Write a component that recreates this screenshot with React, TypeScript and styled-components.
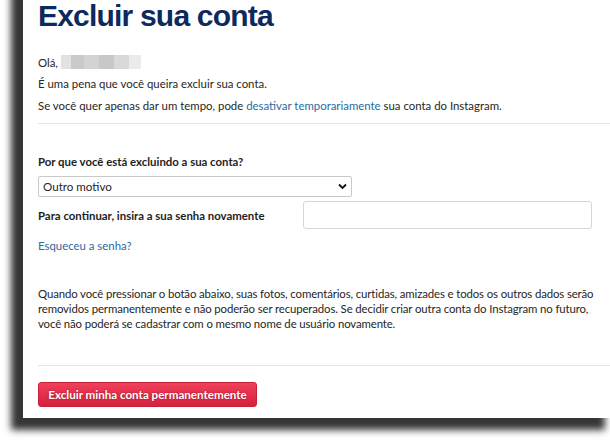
import React from "react";
import styled, { createGlobalStyle } from "styled-components";

const Global = createGlobalStyle`
  html, body { margin: 0; padding: 0; background: #ffffff; }
  body { overflow: hidden; }
  * { box-sizing: border-box; }
`;

const Viewport = styled.div`
  width: 610px;
  height: 440px;
  overflow: hidden;
  background: #ffffff;
`;

const Card = styled.div`
  margin: -24px 0 0 23px;
  width: 594px;
  padding: 25px 0 11px 15px;
  background: #ffffff;
  box-shadow: -12px 12px 7px #363636;
  font-family: Lato, "Open Sans", sans-serif;
  font-size: 11.4px;
  line-height: 15px;
  color: #262626;
`;

const Title = styled.h1`
  margin: 0;
  font-family: "Liberation Sans", Arial, sans-serif;
  font-weight: 700;
  font-size: 30px;
  line-height: 30px;
  letter-spacing: -0.8px;
  color: #0d2a5c;
`;

const Para = styled.p<{ $top: number; $tight?: boolean }>`
  margin: ${(p) => p.$top}px 0 0 0;
  max-width: ${(p) => (p.$tight ? "567px" : "none")};
  letter-spacing: ${(p) => (p.$tight ? "-0.12px" : "normal")};
`;

const Greeting = styled.div`
  margin-top: 24px;
  display: flex;
  align-items: center;
  gap: 3px;
`;

const Blur = styled.span`
  display: inline-flex;
  height: 14px;
  margin-top: -2px;
`;

const Cell = styled.span<{ $w: number; $c: string }>`
  width: ${(p) => p.$w}px;
  height: 100%;
  background: ${(p) => p.$c};
`;

const Link = styled.a`
  color: #2b6aa3;
  text-decoration: none;
`;

const Rule = styled.hr<{ $top: number }>`
  margin: ${(p) => p.$top}px 0 0 0;
  border: 0;
  border-top: 1px solid #e3e3e3;
  height: 0;
`;

const Label = styled.label<{ $top?: number }>`
  display: block;
  margin-top: ${(p) => p.$top ?? 0}px;
  font-weight: 700;
  color: #1e1e1e;
`;

const SelectWrap = styled.div`
  position: relative;
  margin-top: 7px;
  width: 314px;
  height: 21px;
`;

const Select = styled.select`
  appearance: none;
  -webkit-appearance: none;
  width: 100%;
  height: 100%;
  margin: 0;
  padding: 0 20px 0 4px;
  border: 1px solid #c9c9c9;
  border-radius: 2px;
  background: #ffffff;
  font-family: Lato, "Open Sans", sans-serif;
  font-size: 11.6px;
  color: #262626;
  outline: none;
`;

const Chevron = styled.svg`
  position: absolute;
  right: 5px;
  top: 7px;
  width: 9px;
  height: 7px;
  pointer-events: none;
`;

const PasswordRow = styled.div`
  margin-top: 4px;
  display: flex;
  align-items: center;
`;

const RowLabel = styled.label`
  width: 265px;
  font-weight: 700;
  color: #1e1e1e;
`;

const Input = styled.input`
  width: 289px;
  height: 28px;
  margin: 0;
  border: 1px solid #d6d6d6;
  border-radius: 3px;
  background: #ffffff;
  outline: none;
`;

const Forgot = styled.div`
  margin-top: 9px;
`;

const DeleteButton = styled.button`
  margin-top: 16px;
  height: 25px;
  padding: 0;
  width: 219px;
  border: 1px solid #c8203b;
  border-radius: 3px;
  background: linear-gradient(#f0405a, #d6203e);
  color: #ffffff;
  font-family: Lato, "Open Sans", sans-serif;
  font-weight: 700;
  font-size: 11.6px;
  white-space: nowrap;
  text-shadow: 0 0 2px rgba(120, 0, 20, 0.7);
  cursor: pointer;
  display: block;
`;

const blurCells: [number, string][] = [
  [10, "#e2e2e2"],
  [13, "#cacaca"],
  [15, "#d3d3d3"],
  [15, "#c8c8c8"],
  [15, "#d9d9d9"],
  [12, "#ebebeb"],
];

export default function App() {
  return (
    <>
      <Global />
      <Viewport>
        <Card>
          <Title>Excluir sua conta</Title>
          <Greeting>
            <span>Olá,</span>
            <Blur>
              {blurCells.map(([w, c], i) => (
                <Cell key={i} $w={w} $c={c} />
              ))}
            </Blur>
          </Greeting>
          <Para $top={6}>É uma pena que você queira excluir sua conta.</Para>
          <Para $top={7}>
            Se você quer apenas dar um tempo, pode{" "}
            <Link href="#">desativar temporariamente</Link> sua conta do
            Instagram.
          </Para>
          <Rule $top={10} />
          <Label $top={30}>Por que você está excluindo a sua conta?</Label>
          <SelectWrap>
            <Select defaultValue="outro">
              <option value="outro">Outro motivo</option>
            </Select>
            <Chevron viewBox="0 0 9 7">
              <path
                d="M1 1.5 L4.5 5 L8 1.5"
                fill="none"
                stroke="#111"
                strokeWidth="1.8"
              />
            </Chevron>
          </SelectWrap>
          <PasswordRow>
            <RowLabel>Para continuar, insira a sua senha novamente</RowLabel>
            <Input type="password" />
          </PasswordRow>
          <Forgot>
            <Link href="#">Esqueceu a senha?</Link>
          </Forgot>
          <Para $top={33} $tight>
            Quando você pressionar o botão abaixo, suas fotos, comentários,
            curtidas, amizades e todos os outros dados serão removidos
            permanentemente e não poderão ser recuperados. Se decidir criar
            outra conta do Instagram no futuro, você não poderá se cadastrar
            com o mesmo nome de usuário novamente.
          </Para>
          <Rule $top={34} />
          <DeleteButton>Excluir minha conta permanentemente</DeleteButton>
        </Card>
      </Viewport>
    </>
  );
}
